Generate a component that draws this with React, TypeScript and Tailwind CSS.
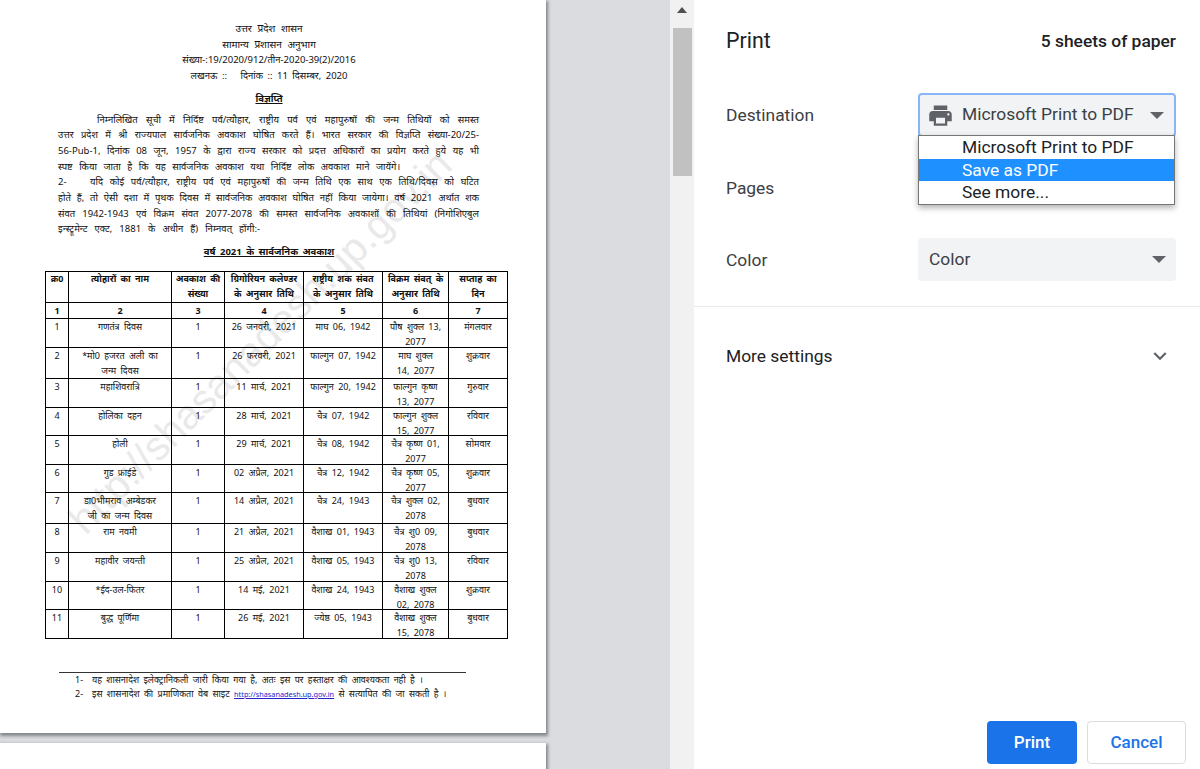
const docFont = "font-['Noto_Sans','Liberation_Sans',sans-serif]";

const colWidths = ['w-[23px]', 'w-[103px]', 'w-[53px]', 'w-[79px]', 'w-[79px]', 'w-[66px]', 'w-[59px]'];

const rows = [
  { h: 'h-[28px]', cells: ['1', 'गणतंत्र दिवस', '1', '26 जनवरी, 2021', 'माघ 06, 1942', 'पौष शुक्ल 13,\n2077', 'मंगलवार'] },
  { h: 'h-[30px]', cells: ['2', '*मो0 हजरत अली का\nजन्म दिवस', '1', '26 फरवरी, 2021', 'फाल्गुन 07, 1942', 'माघ शुक्ल\n14, 2077', 'शुक्रवार'] },
  { h: 'h-[28px]', cells: ['3', 'महाशिवरात्रि', '1', '11 मार्च, 2021', 'फाल्गुन 20, 1942', 'फाल्गुन कृष्ण\n13, 2077', 'गुरुवार'] },
  { h: 'h-[27px]', cells: ['4', 'होलिका दहन', '1', '28 मार्च, 2021', 'चैत्र 07, 1942', 'फाल्गुन शुक्ल\n15, 2077', 'रविवार'] },
  { h: 'h-[28px]', cells: ['5', 'होली', '1', '29 मार्च, 2021', 'चैत्र 08, 1942', 'चैत्र कृष्ण 01,\n2077', 'सोमवार'] },
  { h: 'h-[27px]', cells: ['6', 'गुड फ्राईडे', '1', '02 अप्रैल, 2021', 'चैत्र 12, 1942', 'चैत्र कृष्ण 05,\n2077', 'शुक्रवार'] },
  { h: 'h-[30px]', cells: ['7', 'डा0भीमराव अम्बेडकर\nजी का जन्म दिवस', '1', '14 अप्रैल, 2021', 'चैत्र 24, 1943', 'चैत्र शुक्ल 02,\n2078', 'बुधवार'] },
  { h: 'h-[28px]', cells: ['8', 'राम नवमी', '1', '21 अप्रैल, 2021', 'वैशाख 01, 1943', 'चैत्र शु0 09,\n2078', 'बुधवार'] },
  { h: 'h-[28px]', cells: ['9', 'महावीर जयन्ती', '1', '25 अप्रैल, 2021', 'वैशाख 05, 1943', 'चैत्र शु0 13,\n2078', 'रविवार'] },
  { h: 'h-[27px]', cells: ['10', '*ईद-उल-फितर', '1', '14 मई, 2021', 'वैशाख 24, 1943', 'वैशाख शुक्ल\n02, 2078', 'शुक्रवार'] },
  { h: 'h-[28px]', cells: ['11', 'बुद्ध पूर्णिमा', '1', '26 मई, 2021', 'ज्येष्ठ 05, 1943', 'वैशाख शुक्ल\n15, 2078', 'बुधवार'] },
];

const headers = ['क्र0', 'त्योहारों का नाम', 'अवकाश की\nसंख्या', 'ग्रिगोरियन कलेण्डर\nके अनुसार तिथि', 'राष्ट्रीय शक संवत\nके अनुसार तिथि', 'विक्रम संवत् के\nअनुसार तिथि', 'सप्ताह का\nदिन'];

const bodyLines = [
  'उत्तर प्रदेश में श्री राज्यपाल सार्वजनिक अवकाश घोषित करते हैं। भारत सरकार की विज्ञप्ति संख्या-20/25-',
  '56-Pub-1, दिनांक 08 जून, 1957 के द्वारा राज्य सरकार को प्रदत्त अधिकारों का प्रयोग करते हुये यह भी',
];

const bodyLines2 = [
  'होते हैं, तो ऐसी दशा में पृथक दिवस में सार्वजनिक अवकाश घोषित नहीं किया जायेगा। वर्ष 2021 अर्थात शक',
  'संवत 1942-1943 एवं विक्रम संवत 2077-2078 की समस्त सार्वजनिक अवकाशों की तिथियां (निगोशिएबुल',
];

function Arrow() {
  return (
    <svg width="14" height="7" viewBox="0 0 14 7" className="shrink-0">
      <path d="M0 0h14L7 7z" fill="#5f6368" />
    </svg>
  );
}

function DocPage() {
  return (
    <div className={`relative w-[546px] h-[733px] shrink-0 bg-white overflow-hidden shadow-[1px_2px_3px_1px_rgba(60,64,67,0.55)] text-[#111] ${docFont}`}>
      <div className="absolute left-[-3px] top-[315px] w-[540px] text-[41px] leading-none text-[#e9e9e9] font-['Liberation_Sans',sans-serif] whitespace-nowrap -rotate-45 origin-center">
        http://shasanadesh.up.gov.in
      </div>

      <div className="relative pt-[21px] pl-[45px] w-[508px]">
        <div className="text-center text-[9.5px] leading-[15.5px] pr-[15px]">
          <p className="text-[10px] [word-spacing:3px]">उत्तर प्रदेश शासन</p>
          <p className="text-[10px] [word-spacing:3px]">सामान्य प्रशासन अनुभाग</p>
          <p>संख्या-:19/2020/912/तीन-2020-39(2)/2016</p>
          <p className="[word-spacing:2px] whitespace-pre">लखनऊ ::   दिनांक :: 11 दिसम्बर, 2020</p>
          <p className="mt-[8px] font-bold underline">विज्ञप्ति</p>
        </div>

        <div className="mt-[5px] ml-[13px] w-[421px] text-[9.5px] leading-[15.7px] [text-align-last:justify] whitespace-nowrap">
          <p className="pl-[39px]">निम्नलिखित सूची में निर्दिष्ट पर्व/त्यौहार, राष्ट्रीय पर्व एवं महापुरुषों की जन्म तिथियों को समस्त</p>
          {bodyLines.map((line) => <p key={line}>{line}</p>)}
          <p className="w-[342px]">स्पष्ट किया जाता है कि यह सार्वजनिक अवकाश यथा निर्दिष्ट लोक अवकाश माने जायेंगे।</p>
          <p><span className="inline-block w-[32px] [text-align-last:left]">2-</span>यदि कोई पर्व/त्यौहार, राष्ट्रीय पर्व एवं महापुरुषों की जन्म तिथि एक साथ एक तिथि/दिवस को घटित</p>
          {bodyLines2.map((line) => <p key={line}>{line}</p>)}
          <p className="w-[202px]">इन्स्ट्रूमेन्ट एक्ट, 1881 के अधीन हैं) निम्नवत् होंगी:-</p>
        </div>

        <p className="mt-[7px] text-center pr-[15px] text-[9.5px] leading-[15px] font-bold underline [word-spacing:2px]">वर्ष 2021 के सार्वजनिक अवकाश</p>

        <table className="mt-[12px] w-[462px] table-fixed border-collapse border border-black text-[9px] leading-[14.5px] text-center [word-spacing:2px]">
          <colgroup>
            {colWidths.map((w, i) => <col key={i} className={w} />)}
          </colgroup>
          <thead>
            <tr>
              {headers.map((t) => (
                <th key={t} className="border border-black align-top p-0 font-bold">
                  <div className="h-[30px] whitespace-pre-line">{t}</div>
                </th>
              ))}
            </tr>
            <tr>
              {[1, 2, 3, 4, 5, 6, 7].map((n) => (
                <th key={n} className="border border-black p-0 font-bold">
                  <div className="h-[15px] leading-[15px]">{n}</div>
                </th>
              ))}
            </tr>
          </thead>
          <tbody>
            {rows.map((row) => (
              <tr key={row.cells[0]}>
                {row.cells.map((c, i) => (
                  <td key={i} className="border border-black align-top p-0">
                    <div className={`${row.h} pt-[1px] whitespace-pre-line`}>{c}</div>
                  </td>
                ))}
              </tr>
            ))}
          </tbody>
        </table>

        <div className="mt-[33px] ml-[14px] w-[407px] border-t border-[#333] pl-[16px] text-[9px] leading-[14px] whitespace-nowrap [word-spacing:2px]">
          <p><span className="inline-block w-[17px]">1-</span>यह शासनादेश इलेक्ट्रानिकली जारी किया गया है, अतः इस पर हस्ताक्षर की आवश्यकता नही है ।</p>
          <p><span className="inline-block w-[17px]">2-</span>इस शासनादेश की प्रमाणिकता वेब साइट <span className="text-[7.3px] text-[#2222cc] underline">http://shasanadesh.up.gov.in</span> से सत्यापित की जा सकती है ।</p>
        </div>
      </div>
    </div>
  );
}

export default function App() {
  return (
    <div className="flex h-[769px] w-[1200px] overflow-hidden font-['Roboto',sans-serif] text-[#202124]">
      <div className="w-[670px] h-full bg-[#dadce0] overflow-hidden flex flex-col gap-[10px]">
        <DocPage />
        <div className="w-[546px] h-[200px] shrink-0 bg-white shadow-[1px_2px_3px_1px_rgba(60,64,67,0.55)]" />
      </div>

      <div className="relative w-[24px] h-full bg-[#f1f1f1] flex flex-col items-center">
        <svg width="10" height="6" viewBox="0 0 10 6" className="mt-[7px]">
          <path d="M5 0l5 6H0z" fill="#505050" />
        </svg>
        <div className="mt-[15px] w-[19px] h-[148px] bg-[#c1c1c1]" />
      </div>

      <div className="flex-1 h-full bg-white flex flex-col">
        <div className="flex items-center justify-between h-[79px] pt-[4px] pl-[32px] pr-[24px]">
          <span className="text-[21.4px] font-normal">Print</span>
          <span className="text-[17.4px] font-medium">5 sheets of paper</span>
        </div>

        <div className="pl-[32px] pr-[24px] flex flex-col">
          <div className="relative flex items-center justify-between h-[72px]">
            <span className="text-[17.4px] text-[#3c4043]">Destination</span>
            <div className="flex items-center w-[258px] h-[44px] pl-[7px] pr-[10px] bg-[#f1f3f4] rounded-[4px] border-2 border-[#8ab4f8]">
              <svg width="27" height="27" viewBox="0 0 24 24" fill="#5f6368" className="shrink-0">
                <path d="M19 8H5c-1.66 0-3 1.34-3 3v6h4v4h12v-4h4v-6c0-1.66-1.34-3-3-3zm-3 11H8v-5h8v5zm3-7c-.55 0-1-.45-1-1s.45-1 1-1 1 .45 1 1-.45 1-1 1zm-1-9H6v4h12V3z" />
              </svg>
              <span className="ml-[8px] pb-[2px] flex-1 text-[17.4px] text-[#3c4043]">Microsoft Print to PDF</span>
              <Arrow />
            </div>
            <div className="absolute right-[1px] top-[56px] w-[257px] h-[70px] z-10 bg-white border border-[#767676] shadow-[0_3px_6px_rgba(0,0,0,0.3)] text-[17.4px] leading-[22.5px] text-[#202124]">
              <div className="pl-[43px]">Microsoft Print to PDF</div>
              <div className="pl-[43px] bg-[#1e90ff] text-white">Save as PDF</div>
              <div className="pl-[43px]">See more...</div>
            </div>
          </div>

          <div className="flex items-center h-[73px] pt-[1px]">
            <span className="text-[17.4px] text-[#3c4043]">Pages</span>
          </div>

          <div className="flex items-center justify-between h-[72px]">
            <span className="text-[17.4px] text-[#3c4043]">Color</span>
            <div className="flex items-center justify-between w-[258px] h-[43px] mb-[1px] pl-[11px] pr-[10px] bg-[#f1f3f4] rounded-[4px]">
              <span className="pb-[1px] text-[17.4px] text-[#3c4043]">Color</span>
              <Arrow />
            </div>
          </div>
        </div>

        <div className="mt-[10px] h-[1px] bg-[#e8eaed]" />

        <div className="flex items-center justify-between mt-[25px] h-[48px] pl-[32px] pr-[27px]">
          <span className="text-[17.4px] text-[#202124]">More settings</span>
          <svg width="26" height="26" viewBox="0 0 24 24" fill="#5f6368">
            <path d="M16.59 8.59L12 13.17 7.41 8.59 6 10l6 6 6-6z" />
          </svg>
        </div>

        <div className="mt-auto flex justify-end gap-[10px] pr-[14px] pb-[5px]">
          <button className="w-[90px] h-[43px] rounded-[4px] bg-[#1a73e8] text-white text-[17px] font-medium">Print</button>
          <button className="w-[99px] h-[43px] rounded-[4px] bg-white border border-[#dadce0] text-[#1a73e8] text-[17px] font-medium">Cancel</button>
        </div>
      </div>
    </div>
  );
}
